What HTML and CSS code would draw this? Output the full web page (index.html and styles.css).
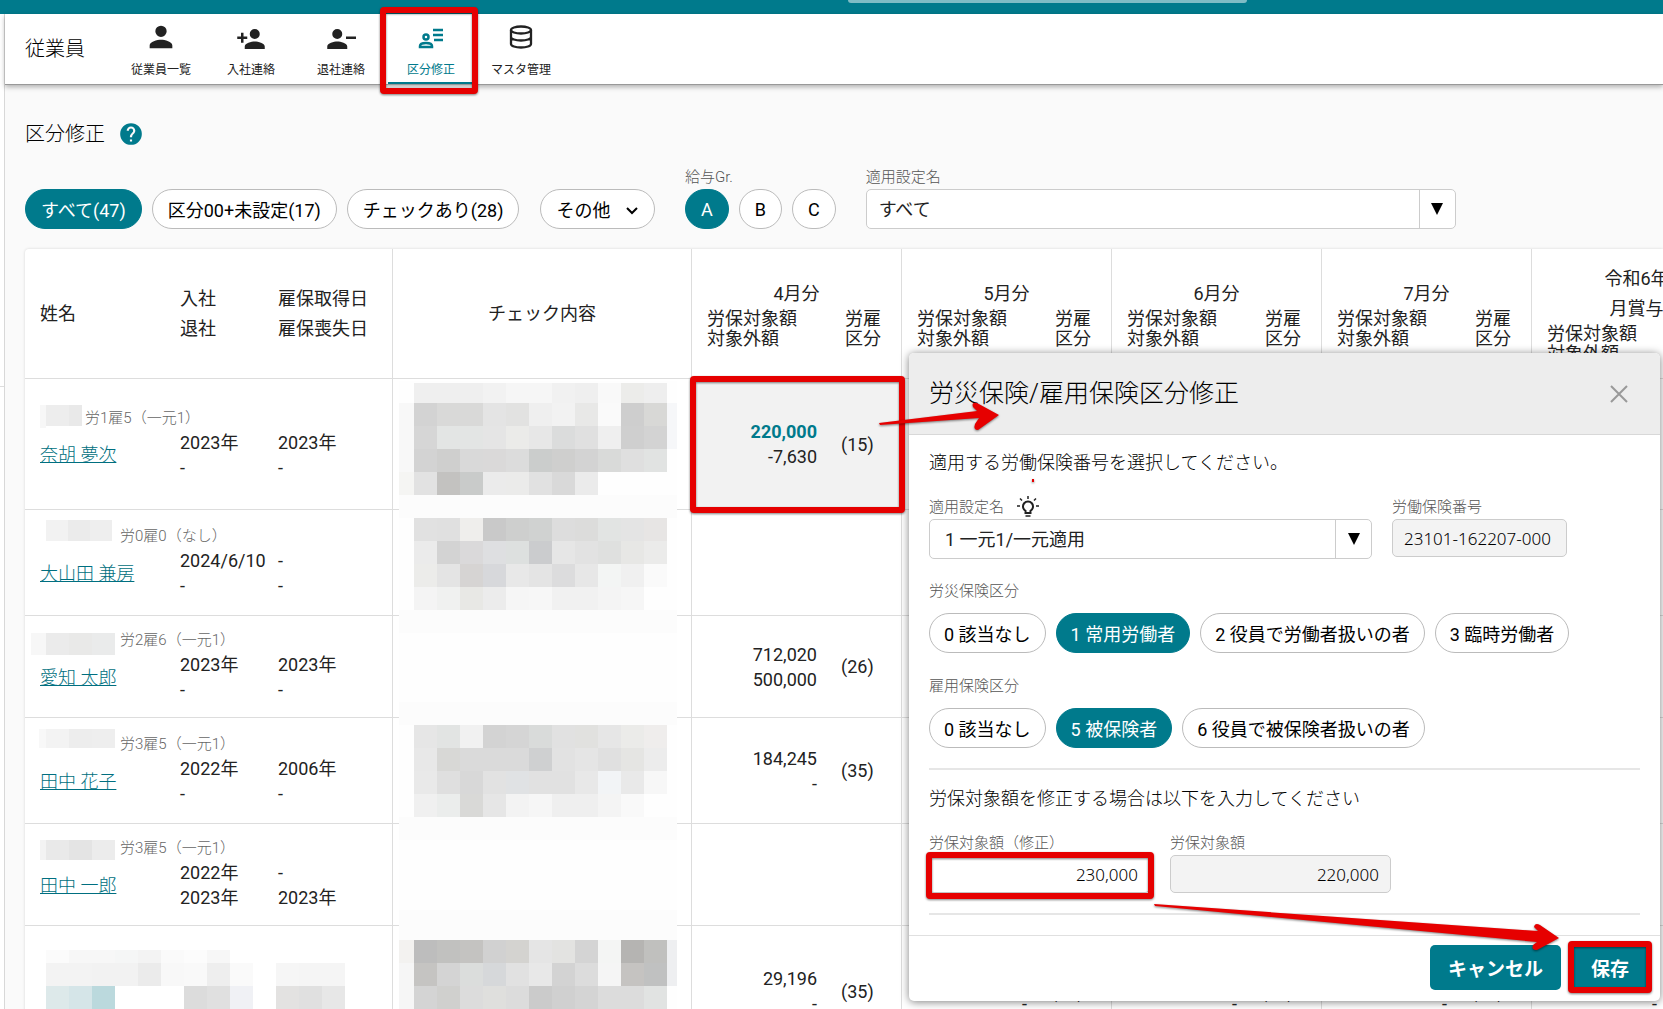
FILE: index.html
```html
<!DOCTYPE html>
<html lang="ja">
<head>
  <meta charset="UTF-8" />
  <meta name="viewport" content="width=device-width, initial-scale=1" />
  <title>区分修正</title>
  <link rel="stylesheet" href="styles.css">
</head>
<body>

  <div class="topbar"><div class="topbar-search"></div></div>

  <div class="layout">
    <aside class="sidebar"><div class="sidebar-item"></div></aside>

    <div class="content">
      <header class="header">
        <h1>従業員</h1>
        <nav class="nav">
          <a href="#list">
            <svg viewBox="0 0 24 24" width="34" height="34"><path d="M12 12a4 4 0 1 0 0-8 4 4 0 0 0 0 8zm0 2c-2.7 0-8 1.3-8 4v2h16v-2c0-2.7-5.3-4-8-4z"/></svg>
            従業員一覧
          </a>
          <a href="#join">
            <svg viewBox="0 0 24 24" width="30" height="30"><path d="M15 12a4 4 0 1 0 0-8 4 4 0 0 0 0 8zm-9-2V7H4v3H1v2h3v3h2v-3h3v-2zm9 4c-2.7 0-8 1.3-8 4v2h16v-2c0-2.7-5.3-4-8-4z"/></svg>
            入社連絡
          </a>
          <a href="#leave">
            <svg viewBox="0 0 24 24" width="30" height="30"><path d="M9 12a4 4 0 1 0 0-8 4 4 0 0 0 0 8zm0 2c-2.7 0-8 1.3-8 4v2h16v-2c0-2.7-5.3-4-8-4zM16 10h8v2h-8z"/></svg>
            退社連絡
          </a>
          <a href="#kubun" class="active">
            <svg viewBox="0 0 26 26" width="26" height="26" fill="none" stroke="currentColor" stroke-width="2.500"><circle cx="8" cy="13" r="2.500"/><path d="M2 23v-1c0-2 3-3 6-3s6 1 6 3v1z"/><path d="M15 6h10M15 11h10M16 16h9"/></svg>
            区分修正
          </a>
          <a href="#master">
            <svg viewBox="0 0 26 26" width="26" height="26" fill="none" stroke="currentColor" stroke-width="2.300"><ellipse cx="13" cy="6" rx="10" ry="3.500"/><path d="M3 6v14c0 2 4.500 3.500 10 3.500S23 22 23 20V6M3 13c0 2 4.500 3.500 10 3.500S23 15 23 13"/></svg>
            マスタ管理
          </a>
        </nav>
      </header>

      <main>
        <div class="page-title">
          <h2>区分修正</h2>
          <svg viewBox="0 0 24 24" width="26" height="26"><path d="M12 2a10 10 0 1 0 0 20 10 10 0 0 0 0-20zm1 17h-2v-2h2zm2.100-7.700-.9.900c-.7.700-1.200 1.300-1.200 2.800h-2v-.5c0-1.100.5-2.100 1.200-2.800l1.200-1.300c.4-.3.600-.8.600-1.400a2 2 0 0 0-4 0H8a4 4 0 0 1 8 0c0 .9-.4 1.700-.9 2.300z"/></svg>
        </div>

        <div class="filters">
          <div class="chips">
            <button class="chip on">すべて(47)</button>
            <button class="chip">区分00+未設定(17)</button>
            <button class="chip">チェックあり(28)</button>
          </div>
          <button class="chip">その他
            <svg viewBox="0 0 14 14" width="14" height="14" fill="none" stroke="currentColor" stroke-width="2"><path d="M2 5l5 5 5-5"/></svg>
          </button>
          <div class="group">
            <span class="label">給与Gr.</span>
            <div class="chips">
              <button class="chip on">A</button>
              <button class="chip">B</button>
              <button class="chip">C</button>
            </div>
          </div>
          <div class="setting">
            <label class="label" for="filterSetting">適用設定名</label>
            <div class="select">
              <select id="filterSetting"><option>すべて</option></select>
              <span class="arrow"></span>
            </div>
          </div>
        </div>

        <div class="table-wrap">
          <table>
            <colgroup>
              <col class="col-name"><col class="col-join"><col class="col-koho"><col class="col-check">
              <col class="col-month"><col class="col-month"><col class="col-month"><col class="col-month"><col class="col-month">
            </colgroup>
            <thead>
              <tr>
                <th>姓名</th>
                <th>入社<br>退社</th>
                <th class="line">雇保取得日<br>雇保喪失日</th>
                <th class="line center">チェック内容</th>
                <th class="line"><div class="month">4月分</div><div class="sub"><span>労保対象額<br>対象外額</span><span>労雇<br>区分</span></div></th>
                <th class="line"><div class="month">5月分</div><div class="sub"><span>労保対象額<br>対象外額</span><span>労雇<br>区分</span></div></th>
                <th class="line"><div class="month">6月分</div><div class="sub"><span>労保対象額<br>対象外額</span><span>労雇<br>区分</span></div></th>
                <th class="line"><div class="month">7月分</div><div class="sub"><span>労保対象額<br>対象外額</span><span>労雇<br>区分</span></div></th>
                <th class="line"><div class="month">令和6年<br>月賞与</div><div class="sub"><span>労保対象額<br>対象外額</span><span>労雇<br>区分</span></div></th>
              </tr>
            </thead>
            <tbody>
              <tr class="tall">
                <td colspan="3" class="line">
                  <p class="meta short">労1雇5（一元1）</p>
                  <div class="person"><a href="#p1">奈胡 夢次</a><span>2023年<br>-</span><span>2023年<br>-</span></div>
                </td>
                <td class="line"></td>
                <td class="line selected"><div class="money"><span><b>220,000</b><br>-7,630</span><span>(15)</span></div></td>
                <td class="line"></td><td class="line"></td><td class="line"></td><td class="line"></td>
              </tr>
              <tr class="mid">
                <td colspan="3" class="line">
                  <p class="meta">労0雇0（なし）</p>
                  <div class="person"><a href="#p2">大山田 兼房</a><span>2024/6/10<br>-</span><span>-<br>-</span></div>
                </td>
                <td class="line"></td>
                <td class="line"></td>
                <td class="line"></td><td class="line"></td><td class="line"></td><td class="line"></td>
              </tr>
              <tr>
                <td colspan="3" class="line">
                  <p class="meta">労2雇6（一元1）</p>
                  <div class="person"><a href="#p3">愛知 太郎</a><span>2023年<br>-</span><span>2023年<br>-</span></div>
                </td>
                <td class="line"></td>
                <td class="line"><div class="money"><span>712,020<br>500,000</span><span>(26)</span></div></td>
                <td class="line"></td><td class="line"></td><td class="line"></td><td class="line"></td>
              </tr>
              <tr class="mid">
                <td colspan="3" class="line">
                  <p class="meta">労3雇5（一元1）</p>
                  <div class="person"><a href="#p4">田中 花子</a><span>2022年<br>-</span><span>2006年<br>-</span></div>
                </td>
                <td class="line"></td>
                <td class="line"><div class="money"><span>184,245<br>-</span><span>(35)</span></div></td>
                <td class="line"></td><td class="line"></td><td class="line"></td><td class="line"></td>
              </tr>
              <tr>
                <td colspan="3" class="line">
                  <p class="meta">労3雇5（一元1）</p>
                  <div class="person"><a href="#p5">田中 一郎</a><span>2022年<br>2023年</span><span>-<br>2023年</span></div>
                </td>
                <td class="line"></td>
                <td class="line"></td>
                <td class="line"></td><td class="line"></td><td class="line"></td><td class="line"></td>
              </tr>
              <tr class="tall">
                <td colspan="3" class="line"></td>
                <td class="line"></td>
                <td class="line"><div class="money"><span>29,196<br>-</span><span>(35)</span></div></td>
                <td class="line"><div class="money"><span><br>-</span><span>(35)</span></div></td>
                <td class="line"><div class="money"><span><br>-</span><span>(35)</span></div></td>
                <td class="line"><div class="money"><span><br>-</span><span>(35)</span></div></td>
                <td class="line"><div class="money"><span><br>-</span></div></td>
              </tr>
            </tbody>
          </table>
        </div>
      </main>
    </div>
  </div>

  <!-- 区分修正ダイアログ -->
  <div class="dialog" role="dialog" aria-labelledby="dialogTitle">
    <div class="dialog-head">
      <h2 id="dialogTitle">労災保険/雇用保険区分修正</h2>
      <button class="close" aria-label="閉じる">
        <svg viewBox="0 0 18 18" width="18" height="18" fill="none" stroke="currentColor" stroke-width="2"><path d="M1 1l16 16M17 1L1 17"/></svg>
      </button>
    </div>

    <div class="dialog-body">
      <p>適用する労働保険番号を選択してください。</p>
      <div class="fields">
        <div class="field-setting">
          <label class="label" for="setting">適用設定名
            <svg viewBox="0 0 24 24" width="24" height="24" fill="none" stroke="currentColor" stroke-width="2"><path d="M9.500 18v-2.200a5 5 0 1 1 5 0V18z"/><path d="M9.500 21h5M12 1v3M1 11h3M20 11h3M4 3.500l2 2M20 3.500l-2 2" stroke-width="1.500"/></svg>
          </label>
          <div class="select">
            <select id="setting"><option>1 一元1/一元適用</option></select>
            <span class="arrow"></span>
          </div>
        </div>
        <div class="field-number">
          <label class="label" for="number">労働保険番号</label>
          <input type="text" id="number" value="23101-162207-000" readonly>
        </div>
      </div>

      <div class="kubun">
        <span class="label">労災保険区分</span>
        <div class="chips">
          <button class="chip">0 該当なし</button>
          <button class="chip on">1 常用労働者</button>
          <button class="chip">2 役員で労働者扱いの者</button>
          <button class="chip">3 臨時労働者</button>
        </div>
      </div>
      <div class="kubun">
        <span class="label">雇用保険区分</span>
        <div class="chips">
          <button class="chip">0 該当なし</button>
          <button class="chip on">5 被保険者</button>
          <button class="chip">6 役員で被保険者扱いの者</button>
        </div>
      </div>

      <hr>

      <p>労保対象額を修正する場合は以下を入力してください</p>
      <div class="fields amounts">
        <div>
          <label class="label" for="amountNew">労保対象額（修正）</label>
          <input type="text" id="amountNew" value="230,000">
        </div>
        <div>
          <label class="label" for="amount">労保対象額</label>
          <input type="text" id="amount" value="220,000" readonly>
        </div>
      </div>

      <hr>
    </div>

    <div class="dialog-foot">
      <button class="primary">キャンセル</button>
      <button class="primary">保存</button>
    </div>
  </div>

  <!-- モザイクと赤枠・矢印 -->
  <svg class="overlay" aria-hidden="true">
    <g id="mosaic"></g>
    <g class="frame">
      <rect x="383" y="10" width="92" height="81" rx="1"/>
      <rect x="693" y="379" width="209" height="131" rx="1"/>
      <rect x="929" y="855" width="222" height="41" rx="1"/>
      <rect x="1571" y="944" width="78" height="46" rx="1"/>
    </g>
    <g class="pointer">
      <path d="M879 423 L977 411 L973 407 Q971 402 977 403 L999 415 L978 430 Q973 430 975 424 L979 418 L880 425z"/>
      <path d="M1154 904 L1538 931 L1534 927 Q1535 922 1540 925 L1559 938 L1537 950 Q1531 950 1533 945 L1537 942 L1155 906z"/>
      <path d="M1032 479h2v3h-2z"/>
    </g>
  </svg>

  <script src="script.js"></script>
</body>
</html>
```

FILE: styles.css
```css
* {
  box-sizing: border-box;
}

body {
  margin: 0;
  height: 100vh;
  overflow: hidden;
  display: flex;
  flex-direction: column;
  position: relative;
  font-family: Roboto, "Noto Sans CJK JP", sans-serif;
  font-size: 18px;
  line-height: 25px;
  color: #222;
  background: #fafafa;
}

h1, h2, p {
  margin: 0;
  font-weight: 300;
  color: #000;
}

button, input, select {
  font-family: inherit;
  font-size: inherit;
  color: inherit;
}

.topbar {
  height: 14px;
  flex: none;
  background: #007a8c;
}

.topbar-search {
  width: 24%;
  height: 3px;
  margin-left: 51%;
  background: #7fbcc5;
  border-radius: 0 0 4px 4px;
}

.layout {
  flex: 1;
  display: flex;
  min-height: 0;
}

.sidebar {
  width: 5px;
  flex: none;
  background: #fff;
  border-right: 1px solid #d8d8d8;
}

.sidebar-item {
  height: 373px;
  border-bottom: 1px solid #ddd;
}

.content {
  flex: 1;
  min-width: 0;
}

/* ヘッダー */
.header {
  display: flex;
  align-items: center;
  height: 71px;
  padding-left: 20px;
  background: #fff;
  border-bottom: 1px solid #999;
  box-shadow: 0 2px 5px rgb(0 0 0 / 0.3);
}

.header h1 {
  width: 93px;
  font-size: 20px;
}

.nav {
  display: flex;
  gap: 4px;
  height: 100%;
}

.nav a {
  width: 86px;
  display: flex;
  flex-direction: column;
  align-items: center;
  justify-content: flex-end;
  padding-bottom: 2px;
  border-bottom: 2px solid transparent;
  font-size: 12px;
  line-height: 20px;
  color: #222;
  text-decoration: none;
}

.nav svg {
  margin-bottom: auto;
  margin-top: 10px;
}

.nav svg[width="34"] {
  margin-top: 6px;
}

.nav svg:not([fill]) {
  fill: currentColor;
}

.nav a.active {
  color: #007a8c;
  border-color: #007a8c;
}

main {
  padding: 34px 0 0 20px;
}

.page-title {
  display: flex;
  align-items: center;
  gap: 13px;
  height: 30px;
}

.page-title h2 {
  font-size: 20px;
}

.page-title svg {
  fill: #007a8c;
}

/* 絞り込み */
.filters {
  display: flex;
  align-items: flex-end;
  margin: 16px 0 20px;
}

.chips {
  display: flex;
  gap: 10px;
}

.chip {
  height: 40px;
  padding: 0 15px;
  border: 1px solid #bbb;
  border-radius: 20px;
  background: #fff;
  color: #000;
  white-space: nowrap;
  cursor: pointer;
}

.chip.on {
  background: #007a8c;
  border-color: #007a8c;
  color: #fff;
}

.chip svg {
  margin-left: 10px;
}

.filters > .chip {
  margin-left: 21px;
}

.label {
  display: flex;
  align-items: center;
  height: 24px;
  font-size: 15px;
  font-weight: 300;
  color: #555;
}

.group {
  margin-left: 30px;
}

.setting {
  width: 590px;
  margin-left: 30px;
}

.select {
  display: flex;
  height: 40px;
  border: 1px solid #ccc;
  border-radius: 5px;
  background: #fff;
}

.select select {
  flex: 1;
  appearance: none;
  padding: 0 12px;
  border: none;
  background: none;
  outline: none;
}

.select .arrow {
  display: flex;
  align-items: center;
  justify-content: center;
  width: 36px;
  border-left: 1px solid #ccc;
}

.select .arrow::before {
  content: "";
  border: 6px solid transparent;
  border-top: 12px solid #000;
  border-bottom: none;
}

/* 一覧表 */
.table-wrap {
  overflow: hidden;
  background: #fff;
  border-radius: 4px 0 0 0;
  box-shadow: 0 0 3px rgb(0 0 0 / 0.15);
}

table {
  width: 1717px;
  table-layout: fixed;
  border-collapse: separate;
  border-spacing: 0;
}

.col-name { width: 140px; }
.col-join { width: 98px; }
.col-koho { width: 130px; }
.col-check { width: 299px; }
.col-month { width: 210px; }

th, td {
  padding: 0 0 0 15px;
  border-bottom: 1px solid #ddd;
  text-align: left;
  font-weight: 400;
}

th {
  height: 130px;
  line-height: 30px;
}

td {
  height: 102px;
}

td:first-child {
  padding-bottom: 3px;
}

.mid td {
  height: 106px;
}

.tall td {
  height: 131px;
}

.line {
  border-right: 1px solid #ddd;
}

.center {
  text-align: center;
  padding: 0;
}

.month {
  margin-left: -15px;
  text-align: center;
}

.sub {
  display: flex;
  justify-content: space-between;
  padding-right: 20px;
  line-height: 20px;
}

.meta {
  padding-left: 80px;
  font-size: 15px;
  line-height: 24px;
  color: #666;
}

.meta.short {
  padding-left: 45px;
}

.person {
  display: grid;
  grid-template-columns: 140px 98px 1fr;
  align-items: center;
}

.person a {
  color: #006f80;
  font-weight: 300;
}

.selected {
  background: #f2f2f2;
}

.selected b {
  color: #007a8c;
}

.money {
  display: flex;
  align-items: center;
  gap: 24px;
}

.money span:first-child {
  width: 110px;
  text-align: right;
}

/* ダイアログ */
.dialog {
  position: absolute;
  right: 3px;
  bottom: 8px;
  width: 751px;
  background: #fff;
  border-radius: 5px;
  box-shadow: 0 1px 8px rgb(0 0 0 / 0.5);
}

.dialog-head {
  display: flex;
  align-items: center;
  justify-content: space-between;
  height: 82px;
  padding: 0 32px 0 20px;
  background: #ededed;
  border-bottom: 1px solid #d8d8d8;
  border-radius: 5px 5px 0 0;
}

.dialog-head h2 {
  font-size: 25px;
}

.close {
  display: flex;
  padding: 0;
  border: none;
  background: none;
  color: #999;
  cursor: pointer;
}

.dialog-body {
  padding: 15px 20px 20px;
}

.dialog .chip {
  padding: 0 14px;
}

.fields {
  display: flex;
  gap: 20px;
  margin-top: 20px;
}

.field-setting {
  flex: 1;
}

.field-setting svg {
  margin-left: 12px;
  color: #222;
}

.field-setting select {
  padding: 0 15px;
}

.field-number {
  width: 175px;
  margin-right: 73px;
}

input {
  display: block;
  width: 100%;
  height: 38px;
  padding: 0 11px;
  border: 1px solid #ccc;
  border-radius: 5px;
  font-family: "Noto Sans", sans-serif;
  font-size: 17px;
  font-weight: 300;
  color: #000;
}

input[readonly] {
  background: #f3f3f3;
}

.kubun {
  margin-top: 20px;
}

.kubun .label {
  margin-bottom: 10px;
}

.kubun + .kubun {
  margin-top: 21px;
}

hr {
  margin: 20px 0 0;
  border: none;
  border-top: 2px solid #e6e6e6;
}

hr + p {
  margin-top: 16px;
}

.amounts > div {
  width: 221px;
}

.amounts input {
  text-align: right;
}

.dialog-foot {
  display: flex;
  justify-content: flex-end;
  gap: 12px;
  padding: 9px 13px 11px;
  border-top: 1px solid #e0e0e0;
}

.primary {
  height: 45px;
  padding: 0 18px;
  border: none;
  border-radius: 5px;
  background: #007a8c;
  color: #fff;
  font-size: 19px;
  font-weight: 700;
  cursor: pointer;
}

/* 注釈 */
.overlay {
  position: absolute;
  top: 0;
  left: 0;
  width: 100%;
  height: 100%;
  pointer-events: none;
}

.frame {
  fill: none;
  stroke: #e60000;
  stroke-width: 6px;
  filter: drop-shadow(0 1px 1px rgb(0 0 0 / 0.5));
}

.pointer {
  fill: #e60000;
  filter: drop-shadow(0 1px 1px rgb(0 0 0 / 0.5));
}
```

FILE: script.js
```js
// x, y, 幅, 高さ, 左からの色
const blocks = [
  [399, 381, 278, 628, 'fefefe'],
  [399, 495, 278, 23, 'fcfcfc'],
  [399, 610, 278, 23, 'fcfcfc'],
  [399, 702, 278, 23, 'fcfcfc'],
  [399, 817, 278, 23, 'fcfcfc'],
  [399, 910, 278, 30, 'fcfcfc'],

  [414, 383, 23, 20, 'efefef efefef efefef f2f2f2 f6f6f6 f6f6f6 f1f1f1 efefef f9f9f9 ececea eeeeee'],
  [414, 403, 23, 23, 'd3d3d3 d9d9d8 d9d9d8 e4e4e4 e2e2e1 efefef f2f2f2 e8e8e7 fafafa cecece d8d8d6'],
  [414, 426, 23, 23, 'd6d6d6 e3e5e4 e3e5e4 e5e5e5 ebebe9 e7e7e7 dbdcdc e0e0e0 efefef cfcfcf d3d3d3'],
  [414, 449, 23, 23, 'd3d3d3 cfcfce d9d9d9 dad9d9 dcdcdc cbcdcc cfcfce d3d3d3 d9dad9 dfdfdf e1e3e2'],
  [414, 472, 23, 23, 'e2e2e2 c3c2c0 c9cbca ebebeb ebebea e1e1e1 d9d9d9 ebebeb'],

  [414, 518, 23, 23, 'e1e1e1 e0e0e0 efeeec c9c9c9 cecfce d0d2d1 dddddd dcdcdb e2e4e3 e4e4e4 e7e5e4'],
  [414, 541, 23, 23, 'ebebeb d3d3d3 dad9da dedfe1 dde0df cbccce e6e6e6 e2e2e2 dfe0df e7e7e5 ebebea'],
  [414, 564, 23, 23, 'ececea e4e4e4 d6d4d3 d7d8db e8e8e8 e4e4e4 dcdcdd e7e7e7 f3f5f4 f0f0f0 fafafa'],
  [414, 587, 23, 23, 'f4f4f4 f0f1f0 e8e8e5 ececec f6f6f6 f7f7f7 f1f1f1 f1f1f1 f4f4f4 f6f6f6'],

  [414, 725, 23, 23, 'e6e6e6 e2e4e3 f1f1f1 d3d3d3 d5d5d5 d9dbda e1e1e1 e1e1df e6e6e6 ebebe9 efedec'],
  [414, 748, 23, 23, 'e8e8e8 d8d8d6 dadada dadada dadada cfd0d1 e2e2e2 e5e5e5 e0e0e0 e5e5e3 ececec'],
  [414, 771, 23, 23, 'e9e9e9 dfdfdf d8d8d8 e2e2e2 e0e2e4 e1e1e1 e1e1e1 e8e8e8 f2f4f6 e9e9e9 f7f7f7'],
  [414, 794, 23, 23, 'f0f0f0 ebedec d9d9d7 e6e6e6 f3f3f3 f6f6f6 efefef efefef f4f4f4 f9f9f9'],

  [414, 940, 23, 23, 'bdbdbd c1c1bf c4c3c1 d1d1d1 d4d3d0 e5e5e5 e3e3e1 d4d4d4 f4f5f4 b5b4b2 c0c0be'],
  [414, 963, 23, 23, 'c5c4c2 d4d4d4 dbdddc d6d8da e1e1e1 e8e8e8 d3d3d3 dcdcdc f5f5f5 c5c3c1 c0c1c1'],
  [414, 986, 23, 23, 'd4d4d4 d0d0ce dcdcdc dfdfdd dcdcdc cbcbcb d0d0d0 d4d4d4 dcdcdc dcdcdc e1e3e2'],

  // 端の薄い部分
  [399, 403, 15, 69, 'f8f8f8'],
  [399, 472, 15, 23, 'f5f5f3'],
  [667, 403, 10, 46, 'f6f7f9'],
  [399, 940, 15, 23, 'f3f2f0'],
  [399, 963, 15, 46, 'f6f6f6'],
  [667, 940, 10, 46, 'eeeff1'],

  // 社員番号
  [40, 405, 6, 23, 'f7f7f7'],
  [46, 405, 23, 21, 'ededed'],
  [69, 405, 13, 21, 'e9e9e9'],
  [46, 520, 22, 21, 'f2f2f2 ebebeb eeeeee'],
  [31, 633, 15, 22, 'f7f7f7'],
  [46, 633, 23, 22, 'ebebeb e9e9e8 eaebeb'],
  [39, 729, 7, 19, 'f8f8f8'],
  [46, 729, 23, 19, 'f3f3f3 ededed eeeeee'],
  [40, 840, 6, 20, 'f3f3f3'],
  [46, 840, 23, 20, 'e9e9e9 e4e4e4 ececec'],
  [46, 950, 23, 13, 'fbfbfb f7f7f7 f7f7f7 f5f6f6 f3f3f3 fafafa fcfcfc f7f7f7'],
  [46, 963, 23, 23, 'f3f3f3 f3f3f3 f2f2f2 f2f2f2 ebebeb f8f8f8 f9f9f9 eeeeee fafafa'],
  [46, 986, 23, 23, 'dde9ea d5e5e8 bbd9dd'],
  [184, 986, 23, 23, 'dcdcdc e0e0e0 f0f1f5'],
  [276, 963, 23, 23, 'f6f6f6 f5f5f5 f5f5f5'],
  [276, 986, 23, 23, 'e3e2e1 e0e0e0 e7e7e7']
];

const mosaic = document.getElementById('mosaic');
blocks.forEach(([x, y, w, h, colors]) => {
  colors.split(' ').forEach((color, i) => {
    const rect = document.createElementNS('http://www.w3.org/2000/svg', 'rect');
    rect.setAttribute('x', x + i * w);
    rect.setAttribute('y', y);
    rect.setAttribute('width', w);
    rect.setAttribute('height', h);
    rect.setAttribute('fill', '#' + color);
    mosaic.appendChild(rect);
  });
});
```
